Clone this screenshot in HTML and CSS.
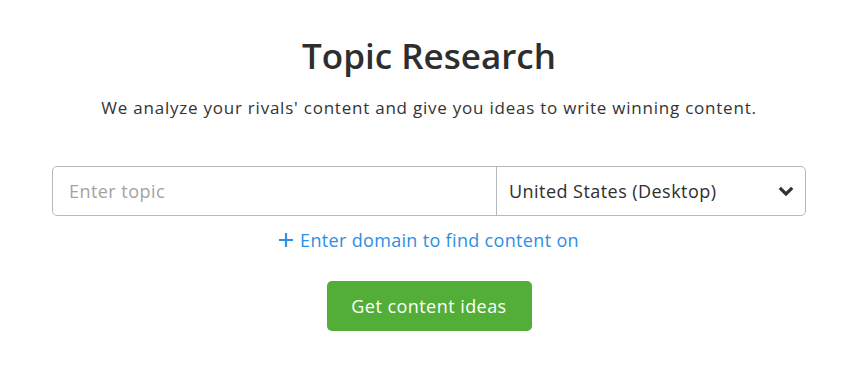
FILE: index.html
```html
<!DOCTYPE html>
<html lang="en">
<head>
<meta charset="utf-8">
<title>Topic Research</title>
<link rel="stylesheet" href="styles.css">
</head>
<body>
<main class="page">
  <h1 class="title">Topic Research</h1>
  <p class="subtitle">We analyze your rivals' content and give you ideas to write winning content.</p>
  <form class="search">
    <input class="topic" type="text" placeholder="Enter topic">
    <div class="select">
      <span class="select-label">United States (Desktop)</span>
      <svg class="chevron" width="16" height="10" viewBox="0 0 16 10"><path d="M1.8 1.8 L8 8 L14.2 1.8" fill="none" stroke="#333" stroke-width="3.2"/></svg>
    </div>
  </form>
  <a class="add-domain" href="#">
    <svg class="plus" width="14" height="14" viewBox="0 0 14 14"><path d="M7 0 V14 M0 7 H14" stroke="#2e8fe3" stroke-width="2.2"/></svg>
    <span>Enter domain to find content on</span>
  </a>
  <button class="cta" type="button">Get content ideas</button>
</main>
</body>
</html>
```

FILE: styles.css
```css
* { box-sizing: border-box; }
html, body { margin: 0; padding: 0; background: #fff; }
body { font-family: "Open Sans", "Noto Sans", sans-serif; color: #333; }

.page {
  width: 754px;
  margin-left: 52px;
  padding-top: 32px;
  display: flex;
  flex-direction: column;
  align-items: center;
}

.title {
  margin: 0;
  font-size: 35px;
  line-height: 48px;
  font-weight: 600;
  color: #2e2e2e;
}

.subtitle {
  margin: 16px 0 0;
  font-size: 17px;
  line-height: 24px;
  letter-spacing: 0.77px;
  color: #333;
}

.search {
  margin-top: 46px;
  width: 754px;
  height: 50px;
  display: flex;
  border: 1px solid #b4b8ba;
  border-radius: 5px;
}

.topic {
  width: 444px;
  border: 0;
  border-right: 1px solid #b4b8ba;
  border-radius: 5px 0 0 5px;
  padding: 0 16px;
  font: inherit;
  font-size: 18px;
  letter-spacing: 0.45px;
  color: #333;
  outline: none;
}
.topic::placeholder { color: #a3a3a3; }

.select {
  flex: 1;
  display: flex;
  align-items: center;
  justify-content: space-between;
  padding: 0 11px 0 12px;
  font-size: 18px;
  letter-spacing: 0.45px;
  color: #2e2e2e;
}

.add-domain {
  margin-top: 13px;
  display: flex;
  align-items: center;
  gap: 7px;
  color: #2e8fe3;
  text-decoration: none;
  font-size: 18px;
  letter-spacing: 0.33px;
  line-height: 22px;
}

.cta {
  margin-top: 30px;
  width: 205px;
  height: 50px;
  border: 0;
  border-radius: 5px;
  background: #52ae36;
  color: #fff;
  font-family: inherit;
  font-size: 18px;
  letter-spacing: 0.45px;
}
```
